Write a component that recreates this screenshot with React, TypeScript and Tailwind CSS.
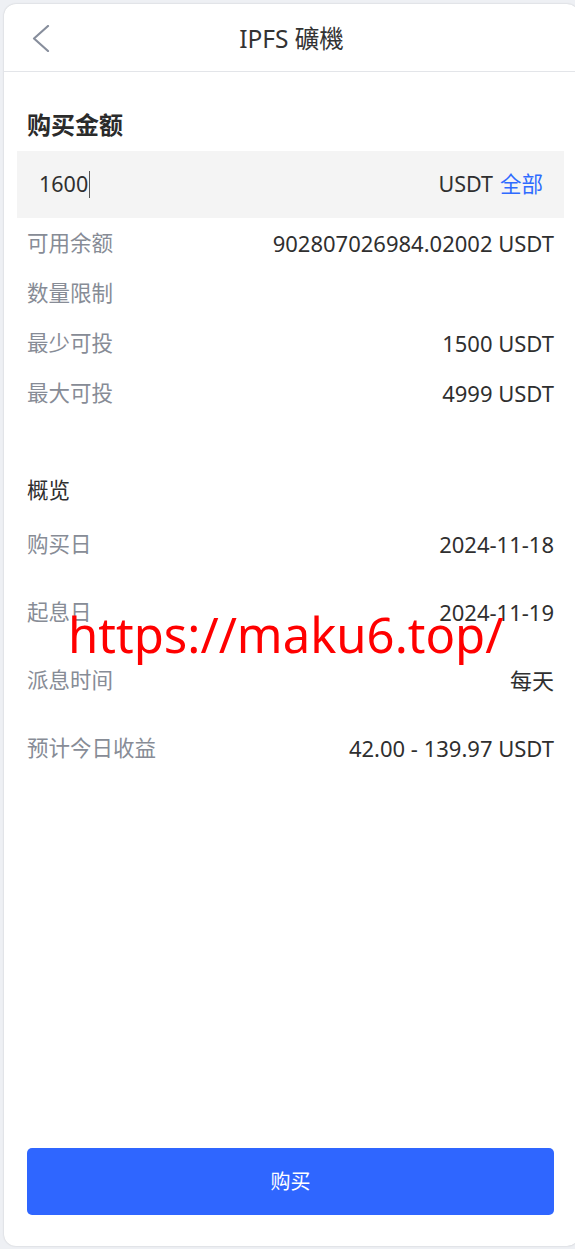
import React from "react";

const font = { fontFamily: '"Noto Sans", "Noto Sans CJK SC", sans-serif' };

function Row({ label, value, h }: { label: string; value?: string; h: string }) {
  return (
    <div className={`flex items-center justify-between px-[10px] ${h}`}>
      <span className="text-[21.5px] text-[#878c96]">{label}</span>
      {value ? <span className="text-[22px] text-[#2f2f2f]">{value}</span> : null}
    </div>
  );
}

export default function App() {
  return (
    <div className="relative w-[575px] h-[1249px] overflow-hidden bg-[#eef0f4] pl-[4px] pt-[4px]" style={font}>
      <div className="relative flex flex-col w-[575px] h-[1242px] bg-white rounded-[12px] shadow-[0_0_2px_rgba(0,0,0,0.18)]">
        {/* header */}
        <div className="relative flex items-center justify-center h-[68px] border-b border-[#e3e5e9]">
          <svg className="absolute left-[28px] top-[21px]" width="18" height="27" viewBox="0 0 18 27" fill="none">
            <polyline points="16,1 2,13.5 16,26" stroke="#878e9c" strokeWidth="2.2" strokeLinecap="round" strokeLinejoin="round" />
          </svg>
          <span className="text-[24.5px] text-[#333] mt-[4px]">IPFS 礦機</span>
        </div>

        <div className="flex flex-col flex-1 ml-[13px] mr-[15px]">
          <div className="px-[10px] pt-[38px] h-[68px] leading-[30px] text-[24px] font-bold text-[#2b2b2b]">购买金额</div>
          <div className="mt-[11px] h-[67px] bg-[#f4f4f4] flex items-center pl-[22px] pr-[21px]">
            <span className="text-[21.5px] text-[#2f2f2f]">1600</span>
            <span className="w-px h-[27px] bg-[#555] ml-[1px]" />
            <span className="flex-1" />
            <span className="text-[21.5px] text-[#2f2f2f]">USDT</span>
            <span className="text-[21.5px] text-[#2f6bff] ml-[7px]">全部</span>
          </div>
          <Row label="可用余额" value="902807026984.02002 USDT" h="h-[50px]" />
          <Row label="数量限制" h="h-[50px]" />
          <Row label="最少可投" value="1500 USDT" h="h-[50px]" />
          <Row label="最大可投" value="4999 USDT" h="h-[50px]" />

          <div className="mt-[52px] h-[40px] flex items-center px-[10px] text-[21.5px] text-[#2f2f2f]">概览</div>
          <Row label="购买日" value="2024-11-18" h="h-[68px]" />
          <Row label="起息日" value="2024-11-19" h="h-[68px]" />
          <Row label="派息时间" value="每天" h="h-[68px]" />
          <Row label="预计今日收益" value="42.00 - 139.97 USDT" h="h-[68px]" />

          <div className="flex-1" />
          <div className="px-[10px] mb-[31px]">
            <button className="w-full h-[67px] rounded-[5px] bg-[#2f66ff] text-white text-[20px] flex items-center justify-center">
              购买
            </button>
          </div>
        </div>

        <div className="absolute left-[64px] top-[605px] text-[49px] leading-[50px] text-[#ff0000] whitespace-nowrap pointer-events-none">
          https://maku6.top/
        </div>
      </div>
    </div>
  );
}
